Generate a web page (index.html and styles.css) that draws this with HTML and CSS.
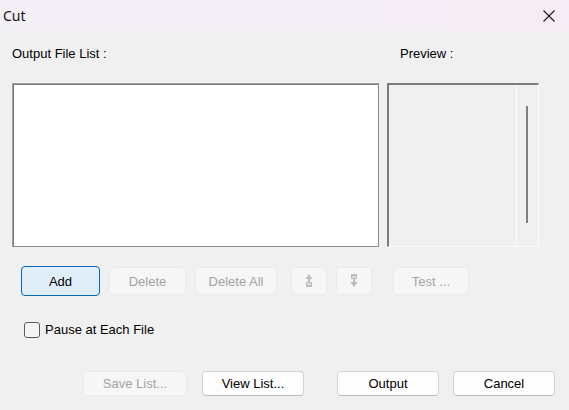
FILE: index.html
```html
<!DOCTYPE html>
<html>
<head>
<meta charset="utf-8">
<link rel="stylesheet" href="styles.css">
</head>
<body>
<div class="dialog">
  <div class="titlebar">
    <span class="title">Cut</span>
    <svg class="close" width="12" height="12" viewBox="0 0 12 12"><path d="M0.5 0.5 L11.5 11.5 M11.5 0.5 L0.5 11.5" stroke="#1a1a1a" stroke-width="1.1" fill="none"/></svg>
  </div>
  <div class="content">
    <div class="labels">
      <span class="lbl-list">Output File List :</span>
      <span class="lbl-preview">Preview :</span>
    </div>
    <div class="panels">
      <div class="listbox"></div>
      <div class="preview">
        <div class="pv-area"></div>
        <div class="pv-scroll"><div class="thumb"></div></div>
      </div>
    </div>
    <div class="row-buttons">
      <button class="btn focus w-add">Add</button>
      <button class="btn disabled w-del">Delete</button>
      <button class="btn disabled w-delall">Delete All</button>
      <button class="btn disabled w-up" aria-label="Move up">
        <svg width="8" height="14" viewBox="0 0 8 14"><path d="M4 0 L7.5 5 L5 5 L5 8 L7 8 L7 13 L1 13 L1 8 L3 8 L3 5 L0.5 5 Z" fill="#bdbdbd"/><path d="M2 10 L6 10" stroke="#f7f7f7" stroke-width="1"/></svg>
      </button>
      <button class="btn disabled w-down" aria-label="Move down">
        <svg width="8" height="14" viewBox="0 0 8 14"><path d="M1 0 L7 0 L7 5 L5 5 L5 8 L7.5 8 L4 13 L0.5 8 L3 8 L3 5 L1 5 Z" fill="#bdbdbd"/><path d="M2 3 L6 3" stroke="#f7f7f7" stroke-width="1"/></svg>
      </button>
      <button class="btn disabled w-test">Test ...</button>
    </div>
    <label class="check-row">
      <span class="checkbox"></span>
      <span class="check-text">Pause at Each File</span>
    </label>
    <div class="row-bottom">
      <button class="btn disabled w-save">Save List...</button>
      <button class="btn w-view">View List...</button>
      <button class="btn w-output">Output</button>
      <button class="btn w-cancel">Cancel</button>
    </div>
  </div>
</div>
</body>
</html>
```
FILE: styles.css
```css
* { box-sizing: border-box; }
html, body { margin: 0; padding: 0; }
body {
  width: 569px;
  height: 410px;
  overflow: hidden;
  background: #f0f0f0;
  font-family: "Liberation Sans", Arial, sans-serif;
  font-size: 13px;
  color: #000;
}
.dialog { width: 569px; height: 410px; display: flex; flex-direction: column; }
.titlebar {
  height: 31px;
  flex: none;
  display: flex;
  align-items: center;
  justify-content: space-between;
  padding: 0 14px 0 3px;
  background: linear-gradient(90deg, #f3eff6 0%, #f4eef6 60%, #f7ecf5 100%);
}
.title { font-family: "Noto Sans", "Open Sans", sans-serif; font-size: 14px; color: #111; }
.close { display: block; margin-top: 1px; }
.content { display: flex; flex-direction: column; }
.labels {
  display: flex;
  margin-top: 15px;
  height: 16px;
  line-height: 16px;
}
.lbl-list { margin-left: 12px; width: 388px; }
.panels {
  display: flex;
  margin-top: 21px;
  height: 164px;
}
.listbox {
  margin-left: 12px;
  width: 367px;
  height: 164px;
  background: #fff;
  border: 1px solid #8c8c8c;
  border-top-color: #a0a0a0;
  border-left-color: #a0a0a0;
  box-shadow: inset 1px 1px 0 #7a7a7a;
}
.preview {
  margin-left: 8px;
  width: 152px;
  height: 164px;
  display: flex;
  border-top: 2px solid #7c7c7c;
  border-left: 2px solid #7c7c7c;
  border-right: 1px solid #fbfbfb;
  border-bottom: 1px solid #fbfbfb;
  background: #f0f0f0;
}
.pv-area { width: 128px; height: 100%; border-right: 1px solid #fbfbfb; }
.pv-scroll { flex: 1; display: flex; justify-content: center; padding-top: 21px; }
.thumb { width: 2px; height: 117px; background: #808080; margin-left: -1px; }
.row-buttons {
  display: flex;
  align-items: center;
  margin-top: 19px;
  height: 30px;
  padding-left: 21px;
}
.btn {
  font-family: "Liberation Sans", Arial, sans-serif;
  font-size: 13px;
  color: #000;
  height: 28px;
  padding: 0;
  background: #fdfdfd;
  border: 1px solid #d2d2d2;
  border-bottom-color: #bcbcbc;
  border-radius: 4px;
  display: flex;
  align-items: center;
  justify-content: center;
}
.btn.disabled {
  background: #f6f6f6;
  color: #a3a3a3;
  border: 1px solid #ebebeb;
}
.btn.focus {
  background: #e0eef9;
  border: 1px solid #0067c0;
  height: 30px;
}
.w-add { width: 79px; }
.w-del { width: 77px; margin-left: 9px; }
.w-delall { width: 82px; margin-left: 9px; }
.w-up { width: 36px; margin-left: 14px; }
.w-down { width: 36px; margin-left: 9px; }
.w-test { width: 76px; margin-left: 21px; }
.check-row {
  display: flex;
  align-items: center;
  margin-top: 26px;
  height: 16px;
  padding-left: 24px;
}
.checkbox {
  width: 16px;
  height: 16px;
  border: 1px solid #5a5a5a;
  border-radius: 3px;
  background: #f5f5f5;
}
.check-text { margin-left: 5px; line-height: 16px; }
.row-bottom {
  display: flex;
  margin-top: 33px;
  padding-left: 83px;
}
.row-bottom .btn { height: 25px; }
.w-save { width: 104px; }
.w-view { width: 102px; margin-left: 15px; }
.w-output { width: 102px; margin-left: 33px; }
.w-cancel { width: 102px; margin-left: 14px; }
```
